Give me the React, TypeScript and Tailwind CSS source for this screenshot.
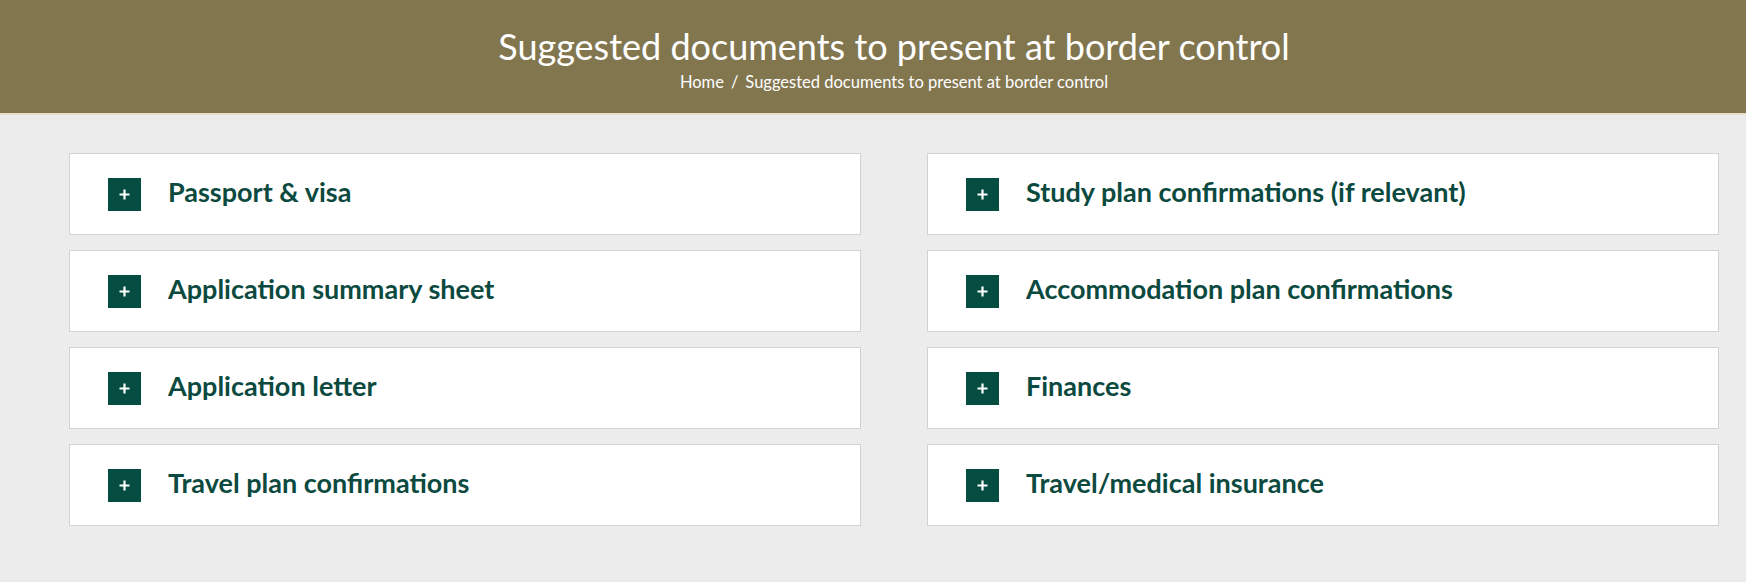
const left = [
  "Passport & visa",
  "Application summary sheet",
  "Application letter",
  "Travel plan confirmations",
];

const right = [
  "Study plan confirmations (if relevant)",
  "Accommodation plan confirmations",
  "Finances",
  "Travel/medical insurance",
];

function PlusBox() {
  return (
    <span className="flex h-[33px] w-[33px] shrink-0 items-center justify-center bg-[#054d41]">
      <svg width="11" height="11" viewBox="0 0 11 11">
        <path d="M5.5 0.5v10M0.5 5.5h10" stroke="#fff" strokeWidth="2.2" />
      </svg>
    </span>
  );
}

function Item({ title }: { title: string }) {
  return (
    <button className="flex h-[82px] w-full items-center border border-[#d2d2d2] bg-white pl-[38px] text-left">
      <PlusBox />
      <span className="ml-[27px] pb-[5px] text-[27px] font-bold leading-none text-[#0c4a40]">
        {title}
      </span>
    </button>
  );
}

export default function App() {
  return (
    <div
      className="min-h-[582px] bg-[#ececec]"
      style={{ fontFamily: "Lato, 'Open Sans', sans-serif" }}
    >
      <header className="border-b-2 border-[#e6decb] bg-[#82764f]">
        <div className="ml-[69px] mr-[27px] flex h-[113px] flex-col items-center pt-[26px] text-white">
          <h1 className="text-[36px] leading-[40px] font-normal">
            Suggested documents to present at border control
          </h1>
          <div className="mt-[6px] text-[16.5px] leading-[20px]">
            Home<span className="mx-[7px]">/</span>Suggested documents to present at border control
          </div>
        </div>
      </header>

      <main className="ml-[69px] mr-[27px] grid grid-cols-2 gap-x-[66px] pt-[38px] pb-[56px]">
        <div className="flex flex-col gap-[15px]">
          {left.map((t) => (
            <Item key={t} title={t} />
          ))}
        </div>
        <div className="flex flex-col gap-[15px]">
          {right.map((t) => (
            <Item key={t} title={t} />
          ))}
        </div>
      </main>
    </div>
  );
}
